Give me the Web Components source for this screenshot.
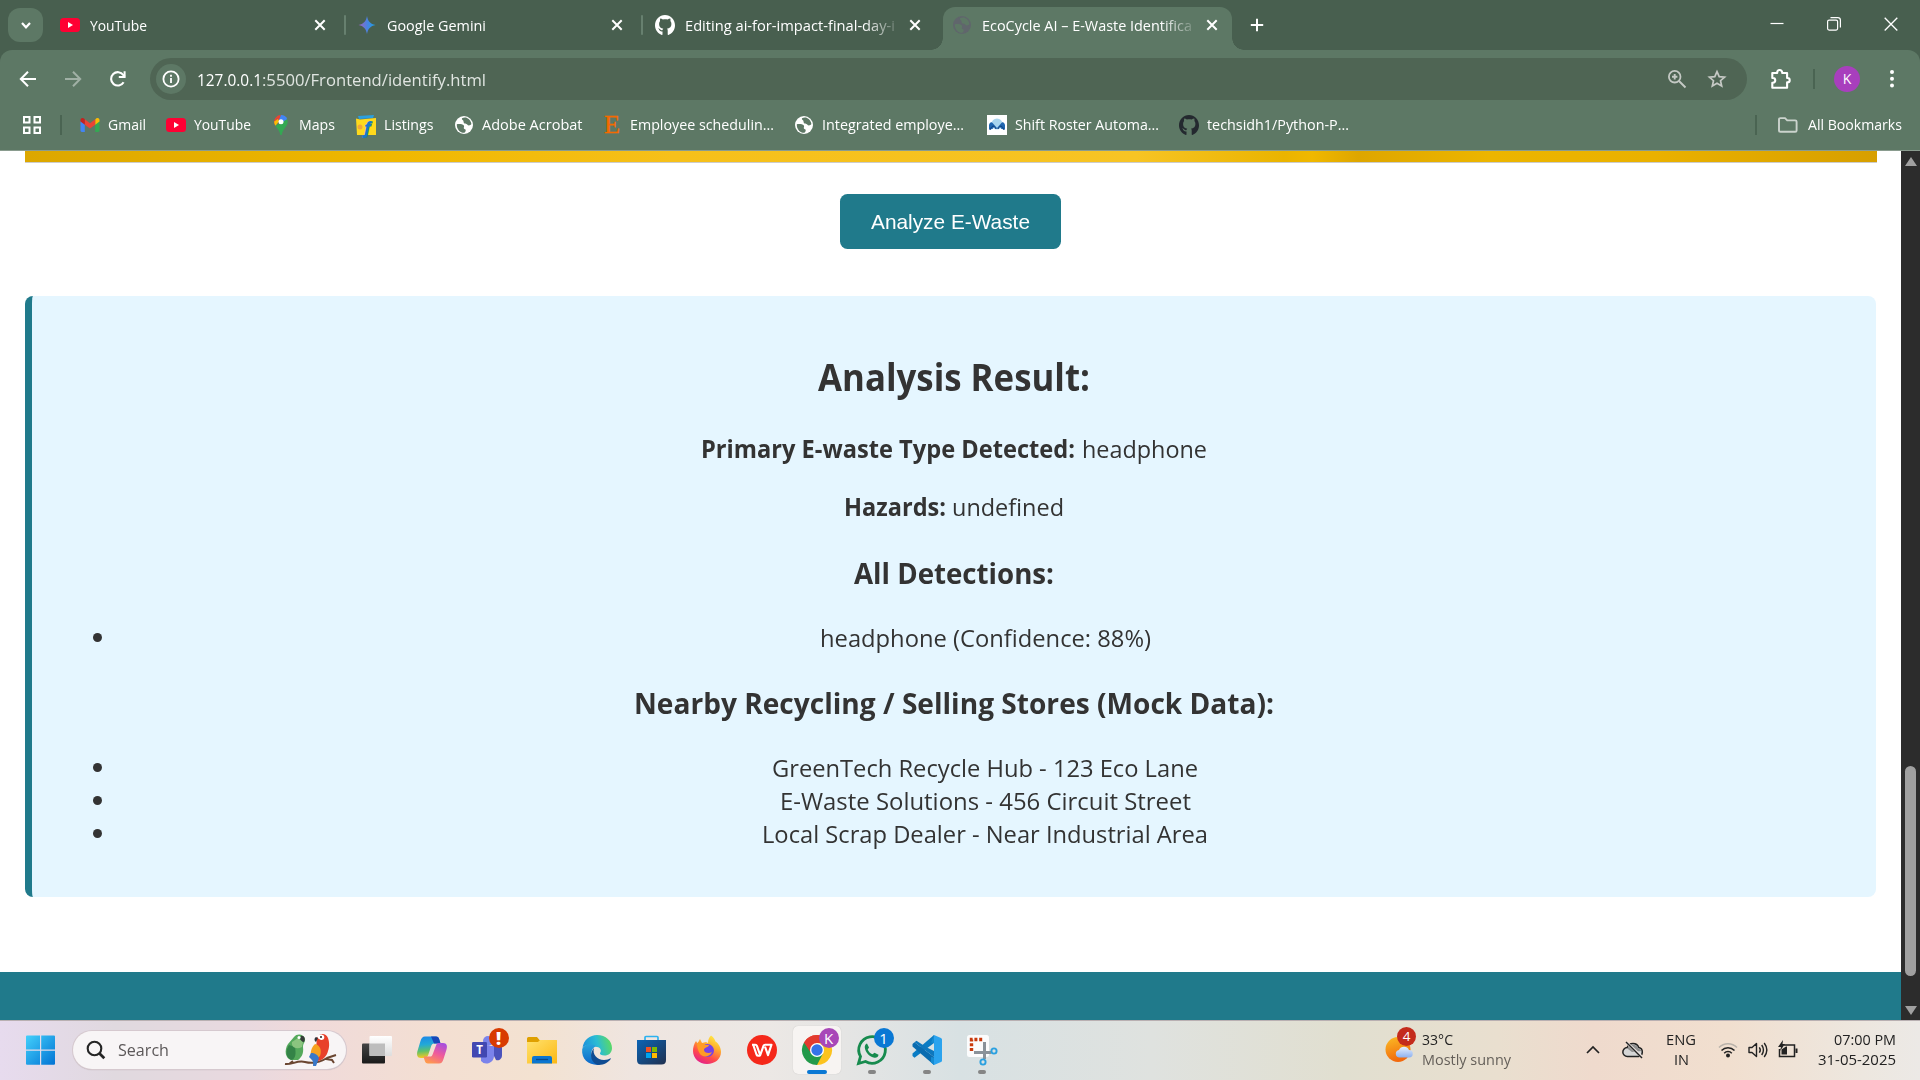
<!DOCTYPE html>
<html lang="en">
<head>
<meta charset="utf-8">
<title>EcoCycle AI – E-Waste Identification</title>
<style>
html,body{margin:0;height:100%;overflow:hidden}
body{font-family:"Open Sans","Noto Sans",sans-serif;background:#fff}
</style>
</head>
<body>
<desktop-screen></desktop-screen>
<script>
const GITHUB='<path d="M10 0C4.5 0 0 4.6 0 10.200c0 4.500 2.900 8.300 6.800 9.700.5.1.7-.2.7-.5v-2.800c-.9-.2-2.600-.4-3.200-1.700-.4-.9-.8-1.300-1.300-1.600-.4-.3 1.100-.3 1.800.8.8 1.200 1.800 1.300 2.800.9.1-.7.4-1.100.7-1.400-2.300-.3-4.200-1.200-4.200-4.800 0-1.200.4-2 1-2.700-.2-.7-.2-1.600.1-2.700.9 0 1.900.5 2.700 1.100 1.400-.4 3.300-.4 4.700 0 .8-.6 1.800-1.100 2.700-1.100.3 1.100.3 2 .1 2.700.7.7 1 1.600 1 2.700 0 3.600-2 4.500-4.400 4.800.4.4.7 1 .7 1.900v3.900c0 .3.2.6.7.5C17.300 18.500 20 14.700 20 10.200 20 4.600 15.500 0 10 0Z"/>';
function globe(c,bg){return `<circle cx="10" cy="10" r="9" fill="${c}"/><path d="M2.800 9.200C5 8.600 8.600 9 9.700 10.300c1 1.200-.3 2.300.2 3.300.5 1.200 1.800.4 1.800 1.800 0 1-.8 1.600-1.200 2.400-4.300.2-8-3.600-7.700-8.600ZM8 3.200c1.600-.9 3.700-.9 5-.3 2.500 1.200 4.200 3.600 4.400 6.100-1.500 1.900-3.300 1.700-4.200.5-.8-1-2-.4-3-1.200-1.100-.9-.2-2.200-1.200-3C8.500 4.800 7.500 4.200 8 3.200Z" fill="${bg}"/>`}
const YT='<rect x="0" y="3" width="20" height="14" rx="3.500" fill="#ff0033"/><path d="M8 7l5 3-5 3Z" fill="#fff"/>';
const ICONS={
chevdown:[20,20,'<path d="M6 8l4 4.300L14 8" fill="none" stroke="#fff" stroke-width="2.200"/>'],
close:[20,20,'<path d="M5.300 5.300l9.400 9.400M14.700 5.300l-9.400 9.400" stroke="#fff" stroke-width="2"/>'],
plus:[20,20,'<path d="M10 3.800v12.400M3.800 10h12.400" stroke="#fff" stroke-width="2"/>'],
yt:[20,20,YT],
gemini:[20,20,'<defs><linearGradient id="g" x1="0" x2="1"><stop offset=".1" stop-color="#9168c0"/><stop offset=".5" stop-color="#4c82e0"/><stop offset="1" stop-color="#1ba1e3"/></linearGradient></defs><path d="M10 1c.9 5.300 3.400 8 8.500 9-5.100 1-7.600 3.700-8.500 9-.9-5.300-3.400-8-8.500-9C6.600 9 9.100 6.300 10 1Z" fill="url(#g)"/>'],
github:[20,20,`<g fill="#fff">${GITHUB}</g>`],
githubdark:[20,20,`<g fill="#24292f">${GITHUB}</g>`],
globe:[20,20,globe('#fff','#5d7865')],
globegrey:[20,20,globe('#60666c','#5d7865')],
min:[20,20,'<path d="M3.500 9.500h13" stroke="#fff" stroke-width="1.200"/>'],
restore:[20,20,'<rect x="3.600" y="6.100" width="10" height="10" rx="1.500" fill="none" stroke="#fff" stroke-width="1.200"/><path d="M6.500 3.600h7.300a2.600 2.600 0 0 1 2.600 2.600v7.300" fill="none" stroke="#fff" stroke-width="1.200"/>'],
winclose:[20,20,'<path d="M3.700 3.700l12.600 12.800M16.300 3.700L3.700 16.500" stroke="#fff" stroke-width="1.300"/>'],
back:[20,20,'<path d="M18 10H3M10 2.800L2.800 10l7.200 7.200" fill="none" stroke="#fff" stroke-width="2"/>'],
fwd:[20,20,'<path d="M2 10h15M10 2.800l7.200 7.200-7.200 7.200" fill="none" stroke="#a0b0a5" stroke-width="2"/>'],
reload:[20,20,'<path d="M15.600 13.200A6.700 6.700 0 1 1 15.300 6l1.500 1.700" fill="none" stroke="#fff" stroke-width="2.100"/><path d="M17.600 2.200v6.800h-6.800V7h4.800V2.200Z" fill="#fff"/>'],
info:[20,20,'<circle cx="10" cy="10" r="7.600" fill="none" stroke="#fff" stroke-width="1.800"/><path d="M10 9v5M10 5.800v1.900" stroke="#fff" stroke-width="1.800"/>'],
zoom:[20,20,'<circle cx="7.700" cy="7.700" r="5.800" fill="none" stroke="#c4c9c4" stroke-width="1.800"/><path d="M12 12l6.500 6.500M7.700 5v5.400M5 7.700h5.400" stroke="#c4c9c4" stroke-width="1.900"/>'],
star:[20,20,'<path d="M10 2.600l2.200 5 5.400.5-4.100 3.600 1.200 5.300L10 14.200 5.300 17l1.200-5.300-4.100-3.600 5.400-.5Z" fill="none" stroke="#c6c9c5" stroke-width="1.700"/>'],
puzzle:[22,22,'<path d="M2.300 5h4.900V4.500a2.500 2.500 0 0 1 5 0V5h4.900v5h.4a2.200 2.200 0 0 1 0 4.400h-.4v5.300H2.300v-5h.6a2.300 2.300 0 0 0 0-4.700h-.6Z" fill="none" stroke="#fff" stroke-width="2.100" stroke-linejoin="round"/>'],
dots:[20,20,'<g fill="#fff"><circle cx="10" cy="3" r="2"/><circle cx="10" cy="9.700" r="2"/><circle cx="10" cy="16.400" r="2"/></g>'],
apps:[20,20,'<g fill="none" stroke="#fff" stroke-width="2"><rect x="2" y="2" width="5.500" height="5.500"/><rect x="12.500" y="2" width="5.500" height="5.500"/><rect x="2" y="12.500" width="5.500" height="5.500"/><rect x="12.500" y="12.500" width="5.500" height="5.500"/></g>'],
gmail:[20,20,'<path d="M.5 6v9.500c0 .8.600 1.400 1.400 1.400h2.900V8.500Z" fill="#4285f4"/><path d="M15.200 8.500v8.400h2.900c.8 0 1.400-.6 1.400-1.400V6Z" fill="#34a853"/><path d="M15.200 4.500v5.200L19.500 6.500V5c0-2-2-2.600-3.300-1.600Z" fill="#fbbc04"/><path d="M4.800 9.700V4.300L10 8.200l5.200-3.900v5.400L10 13.600Z" fill="#ea4335"/><path d="M.5 5v1.500l4.300 3.200V4.300L3.800 3.400C2.400 2.400.5 3 .5 5Z" fill="#c5221f"/>'],
maps:[20,20,'<path d="M10 0a6.800 6.800 0 0 0-5.200 2.400L8 5.200Z" fill="#ea4335"/><path d="M4.800 2.400A6.900 6.900 0 0 0 4 10l4-4.800Z" fill="#ea4335"/><path d="M10 0c3 0 5.200 1.500 6.200 4L11.800 9 8 5Z" fill="#4285f4"/><path d="M3.200 6.500c0 1.700.4 3 1.300 4.300L8.200 6.200 7 4Z" fill="#fbbc04"/><path d="M16.300 4.200c.8 2.200.5 4.600-.8 6.600C13.500 13.800 11.300 16 10.700 20H9.400C8.600 15.500 6 13.500 4.500 10.800Z" fill="#34a853"/><circle cx="10" cy="6.800" r="2.500" fill="#fff"/>'],
listings:[20,20,'<path d="M2 1l16-1-1 3-14 1Z" fill="#2a9fe0"/><path d="M0 3.500l4 1L20 3v17H1Z" fill="#ffd91c"/><circle cx="4" cy="12" r="2.500" fill="#f0a63c"/><text x="8" y="19" font-family="Open Sans" font-size="17" font-weight="800" font-style="italic" fill="#1a78c8">f</text>'],
etsy:[20,20,'<text x="2" y="18" font-family="Liberation Serif" font-size="25" textLength="16" lengthAdjust="spacingAndGlyphs" fill="#f56a00" stroke="#f56a00" stroke-width=".4">E</text>'],
shift:[20,20,'<rect width="20" height="20" fill="#fff"/><circle cx="10" cy="9" r="5.500" fill="#a8d5ee"/><path d="M2 14.500V10c1-3.500 2.800-3.500 4.500-1l3.500 4 3.500-4c1.700-2.500 3.500-2.500 4.500 1v4.500l-3.500-.5-1.500-2-3 2-3-2-1.500 2Z" fill="#1f66b0"/><path d="M3 15c2-5 4-5 6-1M17 15c-2-5-4-5-6-1" stroke="#0e3d7a" fill="none"/>'],
folder:[22,20,'<path d="M2 4.500c0-.8.600-1.400 1.400-1.400H8l2.200 2.300h8c.8 0 1.400.6 1.400 1.400v8.600c0 .8-.6 1.400-1.400 1.400H3.400c-.8 0-1.400-.6-1.400-1.400Z" fill="none" stroke="#cbd3cd" stroke-width="1.900"/>'],
win:[30,30,'<defs><linearGradient id="g" x1="0" y1="0" x2="1" y2="1"><stop offset="0" stop-color="#43d0fb"/><stop offset="1" stop-color="#0273d4"/></linearGradient></defs><path d="M0 1.500Q0 .5 1 .5H14v14H0ZM15.200.5H28q1 0 1 1v13H15.200ZM0 15.700h14v14H1q-1 0-1-1ZM15.200 15.700H29v13q0 1-1 1H15.200Z" fill="url(#g)"/>'],
search:[20,20,'<circle cx="8.500" cy="8.500" r="6.800" fill="none" stroke="#252525" stroke-width="2.100"/><path d="M13.300 13.300l5 5" stroke="#252525" stroke-width="2.700"/>'],
parrots:[54,34,'<path d="M1 31C8 32 13 27 21 29s14 1 22-4l9-3M32 28l-2 4M42 26l6 1 2 3M5 31l4-3" stroke="#6a4631" stroke-width="2" fill="none"/><path d="M10 4c3-4 10-3 11 2 .5 3-2 4-2 8 1 7-2 11-5 13H8C1 26 0 17 4 11Z" fill="#55a95c"/><path d="M5 12c-4 6-3 13 2 15 5-1 5-7 4-13Z" fill="#348347"/><path d="M8 9c-1 5 4 8 10 5l1-5-5-4Z" fill="#8bc47f"/><path d="M17 3c3-1 5 3 3 6-2 0-3-2-4-3Z" fill="#353c39"/><circle cx="15" cy="4.600" r="1.500" fill="#fff"/><path d="M33 4c3-4 9-4 11 1 1 3 2 8 0 13-1 5-5 9-10 10l-2-12Z" fill="#e8402a"/><path d="M31 11c5 1 7 6 5 12-4 4-7 5-9 3-1-7 0-11 4-15Z" fill="#f6a11f"/><path d="M27 20c4 0 7 2 8 5l-3 8h-3c1-5-1-6-4-9Z" fill="#3978c8"/><path d="M33 3c2-2 6-2 7 0 1 3-1 4-3 4-2-1-4-2-4-4Z" fill="#fff"/><path d="M32 4c-2 1-2 4 0 5l2-4Z" fill="#30333a"/><circle cx="37" cy="4" r="1" fill="#222"/>'],
taskview:[30,30,'<defs><linearGradient id="a" x2="0" y2="1"><stop stop-color="#444"/><stop offset="1" stop-color="#1a1a1a"/></linearGradient><linearGradient id="b" x2="0" y2="1"><stop stop-color="#fff"/><stop offset="1" stop-color="#ddd"/></linearGradient></defs><rect y="8.500" width="23" height="20" rx="1" fill="url(#a)"/><rect x="7.500" y="1" width="22.500" height="20" rx="1" fill="url(#b)"/><rect x="7.500" y="8.500" width="15.500" height="12.500" fill="#bdbdbd"/>'],
copilot:[30,30,'<defs><linearGradient id="a" x2=".1" y2="1"><stop stop-color="#1c86e8"/><stop offset=".4" stop-color="#22a9d8"/><stop offset=".7" stop-color="#60c16a"/><stop offset="1" stop-color="#f4c822"/></linearGradient><linearGradient id="b" x1=".8" x2=".3" y2="1"><stop stop-color="#a44fe0"/><stop offset=".5" stop-color="#ef5a9c"/><stop offset="1" stop-color="#ff9a4c"/></linearGradient></defs><path d="M13 1.500h6c2 0 2.700 1 3.300 3l1.200 4H17c-1.500 0-2.300 1-2.800 2.600l-3 9C10.500 22 9.500 23 7.500 23H4C0 23-.5 19.500.500 16L3.500 6C4.500 3 5.500 1.500 8 1.500Z" fill="url(#a)"/><path d="M14 1.500h5c2 0 2.700 1 3.300 3l1.200 4H17Z" fill="#1746b8"/><path d="M17 28.500h-6c-2 0-2.700-1-3.300-3l-1.200-4H13c1.500 0 2.300-1 2.800-2.600l3-8C19.500 8.500 20.500 8 22.500 8H26c4 0 4.500 3 3.500 6.500l-3 9.500c-1 3-2 4.500-4.500 4.500Z" fill="url(#b)"/>'],
teams:[30,30,'<circle cx="24" cy="7" r="4" fill="#5059c9"/><circle cx="16" cy="6" r="5" fill="#7b83eb"/><path d="M17 11h11.500c.8 0 1.500.7 1.500 1.500V20c0 4-3 6-6 5Z" fill="#4b53bc"/><path d="M9 11h13v10a7.500 7.500 0 0 1-13 5Z" fill="#7b83eb"/><rect y="7" width="15" height="15.500" rx="1.300" fill="#4248b2"/><text x="7.500" y="18.500" text-anchor="middle" font-family="Open Sans" font-size="11.500" font-weight="700" fill="#fff">T</text>'],
explorer:[30,30,'<path d="M0 3.500Q0 2 1.500 2H10l2.500 3H28.500Q30 5 30 6.500V12H0Z" fill="#dfa000"/><defs><linearGradient id="a" x2="1" y2="1"><stop stop-color="#ffe26e"/><stop offset="1" stop-color="#fcb813"/></linearGradient></defs><path d="M0 7h11l2-2h16q1 0 1 1v22.500H0Z" fill="url(#a)"/><path d="M5 28.500V23q0-2 2-2h16q2 0 2 2v5.500Z" fill="#0b76d0"/><path d="M9 24.500h12" stroke="#064a8c" stroke-width="1.300"/>'],
edge:[30,30,'<defs><linearGradient id="a" x2="1" y1=".5" y2=".3"><stop stop-color="#1b8fdc"/><stop offset=".5" stop-color="#2bbcd4"/><stop offset="1" stop-color="#5fdc5a"/></linearGradient><linearGradient id="b" x2="0" y2="1"><stop stop-color="#28a4dc"/><stop offset="1" stop-color="#0b66c8"/></linearGradient></defs><path d="M.5 13C1.500 5 8 0 15 0c9 0 15 6 15 13 0 5-3.500 7.500-7.500 7.500-3 0-5-1-4.500-2.500 2-2 .6-5.500-3-6C9 11 3 9 .5 13Z" fill="url(#a)"/><path d="M.2 14C2 8.500 9 8 14 11c-4 2-6 7-4 12 1.500 3.500 4 6 8 6.700C8 31-1 25 .2 14Z" fill="url(#b)"/><path d="M12 13c-2 6 3 12 10 12 3 0 5-.8 6-1.500.6-.4 1 .1.700.6C26.500 27.500 22 30 17 30 10 29 6 20 12 13Z" fill="#0f4c92"/>'],
store:[30,30,'<defs><linearGradient id="a" x2="1" y2="1"><stop stop-color="#0b64b5"/><stop offset="1" stop-color="#20304f"/></linearGradient></defs><path d="M8 7V2.500Q8 1.500 9 1.500h11q1 0 1 1V7" fill="none" stroke="#2cb2f0" stroke-width="1.700"/><path d="M0 5h29v20q0 4.500-4.500 4.500h-20Q0 29.500 0 25Z" fill="url(#a)"/><path d="M9 12h5v5H9Z" fill="#f25022"/><path d="M15 12h5v5h-5Z" fill="#7fba00"/><path d="M9 18h5v5H9Z" fill="#00a4ef"/><path d="M15 18h5v5h-5Z" fill="#ffb900"/>'],
firefox:[30,30,'<defs><linearGradient id="a" x1=".8" x2=".3" y2="1"><stop stop-color="#fff04a"/><stop offset=".35" stop-color="#ffb02c"/><stop offset=".7" stop-color="#ff4a4a"/><stop offset="1" stop-color="#e3208c"/></linearGradient></defs><path d="M19 .5c3 2 4 4.500 4.500 6 3 2 5.500 6 5.500 10.500C29 24 23 29 15 29S1 23 1 16c0-4 1-7 3-10l1.500 2.500L8 4l2 4 4-1 2 1c0-3 1-6 3-7.500Z" fill="url(#a)"/><circle cx="15.500" cy="15.500" r="6.500" fill="#7542e5"/><path d="M5 8c3-1 6 0 8 2h4c-1 3-5 2-5 5s5 4 8 2c-2 5-9 6-12 2-2-3-3-7-3-11Z" fill="#ff9b25"/>'],
wps:[30,30,'<circle cx="15" cy="15" r="15" fill="#f5281a"/><path d="M5 9.700h3.300q1.200 0 1.600 1.200l3.300 9.300 3.300-9.300q.4-1.200 1.600-1.200H24.500L21 20.200l-3-8.500M6.300 10l3.200 9.500q.5 1.300 1.800 1.300h2" fill="none" stroke="#fff" stroke-width="2.100" stroke-linejoin="round"/>'],
chrome:[30,30,'<path d="M15 15L2 7.500A15 15 0 0 1 28 7.500Z" fill="#e33b2e"/><path d="M15 15L28 7.500A15 15 0 0 1 15 30l-3-3Z" fill="#fcc31e"/><path d="M15 15l6 3.500L15 30A15 15 0 0 1 2 7.500Z" fill="#229a4a"/><path d="M15 8h13.300L21 19l-6-4Z" fill="#fcc31e"/><path d="M2 7.500L9 18l6-10 13-.5A15 15 0 0 0 2 7.500Z" fill="#e33b2e"/><circle cx="15" cy="15" r="7" fill="#fff"/><circle cx="15" cy="15" r="5.700" fill="#3473e8"/>'],
whatsapp:[30,30,'<path d="M1.500 28.500L3.500 21.500A13.300 13.300 0 1 1 8.500 26.500Z" fill="none" stroke="#178b4e" stroke-width="2.800"/><path d="M10 8.500l2 4-1.300 2c1 2.300 2.500 3.800 4.800 4.800l2-1.600 4 2c0 2-2 3.300-4 3-5-1-9-5-9.700-10-.2-2 .7-3.700 2.200-4.200Z" fill="#178b4e"/>'],
vscode:[30,30,'<path d="M22 8L2.500 22.800.500 21V18.500L22 0Z" fill="#0a7cc4"/><path d="M22 22L2.500 7.200.500 9V11.500L22 30Z" fill="#0a6cb0"/><path d="M2.500 7.200L22 22v-6L14 12 4.500 5.800Z" fill="#0e77bd"/><path d="M22 0l7 3q1 .5 1 1.500v21q0 1-1 1.500l-7 3c-1 0-1-1 0-3Z" fill="#2ba3ee"/><path d="M22 0v30l-3-2.500V22l3 .500V8l-3-.500Z" fill="#168bd2"/>'],
snip:[30,30,'<rect width="22" height="22" rx="2.500" fill="#fff" opacity=".9"/><path d="M4.500 16V4.500H16" fill="none" stroke="#c93a0c" stroke-width="3.400" stroke-dasharray="3 1.800"/><path d="M7 17.500h17M17.500 7v17" stroke="#8a9299" stroke-width="3"/><circle cx="27" cy="16" r="2.600" fill="none" stroke="#2aa0e0" stroke-width="1.900"/><circle cx="16" cy="27" r="2.600" fill="none" stroke="#2aa0e0" stroke-width="1.900"/>'],
sun:[30,30,'<defs><linearGradient id="a" x2=".3" y2="1"><stop stop-color="#fbbd25"/><stop offset="1" stop-color="#f2690d"/></linearGradient><linearGradient id="b" x2="0" y2="1"><stop stop-color="#e6f0ff"/><stop offset="1" stop-color="#8eb1ef"/></linearGradient></defs><circle cx="13" cy="14.500" r="12.500" fill="url(#a)"/><path d="M14 22.500a3.800 3.800 0 0 1 0-7.500 5.500 5.500 0 0 1 10 0 3.700 3.700 0 0 1 0 7.500Z" fill="url(#b)"/>'],
up:[20,20,'<path d="M4 13l6-6 6 6" fill="none" stroke="#222" stroke-width="1.700"/>'],
cloud:[22,20,'<path d="M5.500 16.500a4.500 4.500 0 0 1-.3-9 6.200 6.200 0 0 1 11.600 0 4.600 4.600 0 0 1-.3 9Z" fill="#d6d6d6" stroke="#222" stroke-width="1.500"/><path d="M5.300 8.500a6 6 0 0 1 11.200 0q2 .5 3 2.500L10 12Z" fill="#8e8e8e"/><path d="M4.500 2.500l15 14" stroke="#e8e0dc" stroke-width="3"/><path d="M4 2l16 16" stroke="#222" stroke-width="1.500"/>'],
wifi:[20,20,'<g fill="none" stroke="#222" stroke-width="1.500"><path d="M1 7.600a12.500 12.500 0 0 1 18 0" stroke="#b9b2aa"/><path d="M3.500 10.500a9 9 0 0 1 13 0M6.200 13.200a5.300 5.300 0 0 1 7.600 0"/></g><circle cx="10" cy="15.500" r="2" fill="#222"/>'],
volume:[20,20,'<g fill="none" stroke="#222" stroke-width="1.400"><path d="M1 7.500h3l4.500-4v13l-4.500-4H1Z" stroke-linejoin="round"/><path d="M11.300 7.300q2 2.700 0 5.400M13.700 5q3.500 5 0 10M16.200 3q5.300 7 0 14"/></g>'],
battery:[20,20,'<path d="M6 5h10.500v11.500h-15V9" fill="none" stroke="#222" stroke-width="1.500"/><path d="M3.500 14.500V9.500L8 6.500h1v8Z" fill="#222"/><path d="M5 0L0 7h3L2 11l5-7H4.500Z" fill="#222"/><rect x="17.500" y="8.500" width="2" height="4.500" fill="#222"/>']
};
const make=(name,html)=>customElements.define(name,class extends HTMLElement{
  constructor(){super();this.attachShadow({mode:'open'}).innerHTML=typeof html==='function'?html(this):html;}
});
make('desktop-screen',`<style>:host{display:flex;flex-direction:column;width:1920px;height:1080px;overflow:hidden}page-view{flex:1;min-height:0}</style>
<tab-strip></tab-strip><tool-bar></tool-bar><bookmarks-bar></bookmarks-bar><page-view></page-view><task-bar></task-bar>`);
make('tab-strip',`<style>
:host{display:flex;height:50px;background:#485f4f;box-sizing:border-box;padding-left:8px;color:#fff;font-size:14.500px}
.menu{width:35px;height:34px;border-radius:12px;background:#5d7865;margin-top:8px;display:flex;align-items:center;justify-content:center;margin-right:4px}
.new{margin:15px 0 0 10px}.wc{display:flex;margin:14px 19px 0 auto;gap:37px}
</style><div class="menu"><ui-icon n="chevdown"></ui-icon></div>
<browser-tab icon="yt" sep><fit-text w="57">YouTube</fit-text></browser-tab>
<browser-tab icon="gemini" sep><fit-text w="99">Google Gemini</fit-text></browser-tab>
<browser-tab icon="github"><fit-text w="210" fade>Editing ai-for-impact-final-day-i</fit-text></browser-tab>
<browser-tab icon="globegrey" active><fit-text w="210" fade>EcoCycle AI – E-Waste Identifica</fit-text></browser-tab>
<ui-icon class="new" n="plus"></ui-icon><div class="wc"><ui-icon n="min"></ui-icon><ui-icon n="restore"></ui-icon><ui-icon n="winclose"></ui-icon></div>`);
make('browser-tab',e=>`<style>
:host{display:block;flex:none;width:297.500px;height:50px}
.t{display:flex;align-items:center;height:36px;margin-top:7px;padding:0 15px 7px 12.500px;position:relative}
:host([active]) .t{background:#5d7865;border-radius:12px 12px 0 0;margin:7px 5px 0 3px;padding:0 10.500px 7px 9px}
.sep{position:absolute;right:-1px;top:8px;width:2px;height:20px;border-radius:1px;background:#67806f}
.c{position:absolute;bottom:0;width:12px;height:12px}
.l{left:-12px;background:radial-gradient(circle at 0 0,#0000 11.500px,#5d7865 12px)}
.r{right:-12px;background:radial-gradient(circle at 100% 0,#0000 11.500px,#5d7865 12px)}
.n{flex:1;padding-left:10px;display:flex}
</style><div class="t"><ui-icon n="${e.getAttribute('icon')}"></ui-icon><div class="n"><slot></slot></div><ui-icon n="close"></ui-icon>${e.hasAttribute('active')?'<i class="c l"></i><i class="c r"></i>':e.hasAttribute('sep')?'<i class="sep"></i>':''}</div>`);
make('tool-bar',`<style>
:host{display:block;background:#485f4f;color:#fff}
.b{height:58px;background:#5d7865;border-radius:12px 12px 0 0;display:flex;align-items:center;padding:0 18px;box-sizing:border-box}
.b>*{flex:none}
.nav{display:flex;gap:25px;width:132px}
.url{height:42px;border-radius:21px;background:#4f6554;width:1597px;display:flex;align-items:center;padding:0 20px 0 6px;box-sizing:border-box;font-size:16.800px}
.i{width:30px;height:30px;border-radius:50%;background:#5d7865;display:flex;align-items:center;justify-content:center;margin-right:11px}
.p{color:#e0e5e1}.z{margin-left:auto;display:flex;gap:20px}
.av{width:26px;height:26px;border-radius:50%;background:#a83fbd;font-size:14px;line-height:26px;text-align:center;margin:0 22px 0 19px}
.s{width:2px;height:20px;background:#4a6452;margin-left:21px}
</style><div class="b"><div class="nav"><ui-icon n="back"></ui-icon><ui-icon n="fwd"></ui-icon><ui-icon n="reload"></ui-icon></div>
<div class="url"><div class="i"><ui-icon n="info"></ui-icon></div><fit-text w="65">127.0.0.1</fit-text><fit-text class="p" w="224">:5500/Frontend/identify.html</fit-text><div class="z"><ui-icon n="zoom"></ui-icon><ui-icon n="star"></ui-icon></div></div>
<ui-icon n="puzzle" style="margin-left:23px"></ui-icon><div class="s"></div><div class="av">K</div><ui-icon n="dots"></ui-icon></div>`);
make('bookmark-item',e=>`<style>:host{display:flex;align-items:center;gap:8px}</style><ui-icon n="${e.getAttribute('icon')}"></ui-icon><slot></slot>`);
make('bookmarks-bar',`<style>
:host{display:flex;height:43px;box-sizing:border-box;background:#5d7865;border-bottom:1px solid #8a9c8f;align-items:center;padding:0 18px 9px 22px;color:#fff;font-size:14.500px}
.s{width:2px;height:20px;background:#4a6452}
bookmark-item{margin-right:20.500px}
</style><ui-icon n="apps"></ui-icon><div class="s" style="margin:0 18px 0 18px"></div>
<bookmark-item icon="gmail" style="margin-right:19.500px"><fit-text w="38">Gmail</fit-text></bookmark-item>
<bookmark-item icon="yt"><fit-text w="57">YouTube</fit-text></bookmark-item>
<bookmark-item icon="maps"><fit-text w="36">Maps</fit-text></bookmark-item>
<bookmark-item icon="listings"><fit-text w="49.500">Listings</fit-text></bookmark-item>
<bookmark-item icon="globe" style="margin-right:19.500px"><fit-text w="100.500">Adobe Acrobat</fit-text></bookmark-item>
<bookmark-item icon="etsy"><fit-text w="144">Employee schedulin...</fit-text></bookmark-item>
<bookmark-item icon="globe" style="margin-right:22.500px"><fit-text w="142">Integrated employe...</fit-text></bookmark-item>
<bookmark-item icon="shift"><fit-text w="144">Shift Roster Automa...</fit-text></bookmark-item>
<bookmark-item icon="githubdark"><fit-text w="142">techsidh1/Python-P...</fit-text></bookmark-item>
<div class="s" style="margin:0 20px 0 auto"></div><ui-icon n="folder"></ui-icon><fit-text w="94" style="margin-left:9px">All Bookmarks</fit-text>`);
make('page-view',`<style>
:host{display:flex;background:#fff}
main{flex:1;display:flex;flex-direction:column;align-items:center;overflow:hidden}
.img{width:1852px;height:11px;border-bottom:1px solid #ccc;background:linear-gradient(90deg,#dca700 0,#f0b800 20%,#f6c01a 35%,#f7c424 60%,#eab400 68%,#f0b800 69.500%,#dea600 72%,#ecb500 79%,#eab100 88%,#d79f00 100%)}
button{margin:31px 0 47px;width:221px;height:55px;border:0;border-radius:7.500px;background:#207a8b;color:#fff;font:20.800px "Liberation Sans",sans-serif;padding:0;display:flex;align-items:center;justify-content:center}
footer{margin-top:auto;width:100%;height:48px;background:#207a8b}
</style><main><div class="img"></div><button><fit-text w="159">Analyze E-Waste</fit-text></button><analysis-result></analysis-result><footer></footer></main><scroll-bar></scroll-bar>`);
make('scroll-bar',`<style>:host{display:flex;flex-direction:column;align-items:center;width:19px;background:#2c2c2c;box-sizing:border-box;padding:6px 0 5px}
.u,.d{width:0;height:0;border:6px solid #0000}.u{border-top:0;border-bottom:9px solid #a0a0a0}.d{border-bottom:0;border-top:9px solid #a0a0a0;margin-top:auto}
.t{width:11px;height:210px;border-radius:6px;background:#a0a0a0;margin-top:600px}</style><div class="u"></div><div class="t"></div><div class="d"></div>`);
make('analysis-result',`<style>
:host{display:block;box-sizing:border-box;width:1851px;height:601px;border-left:7px solid #207a8b;border-radius:8px;background:#e5f6ff;padding:56px 25px 0;color:#333;font-size:24.500px;text-align:center}
h2,h3,p,ul{margin:0;display:flex;justify-content:center}
h2{font-size:37px;line-height:50px;margin-bottom:30px}
p{line-height:33.250px;margin-bottom:25px}
h3{font-size:28.800px;line-height:39px;margin:29px 0}
ul{flex-direction:column;padding-left:36px}
</style><h2><fit-text w="272">Analysis Result:</fit-text></h2>
<p><fit-text w="374"><b>Primary E-waste Type Detected:</b></fit-text><fit-text w="125" style="margin-left:6.500px">headphone</fit-text></p>
<p><fit-text w="102"><b>Hazards:</b></fit-text><fit-text w="112" style="margin-left:6px">undefined</fit-text></p>
<h3><fit-text w="200">All Detections:</fit-text></h3>
<ul><list-row><fit-text w="331">headphone (Confidence: 88%)</fit-text></list-row></ul>
<h3><fit-text w="640">Nearby Recycling / Selling Stores (Mock Data):</fit-text></h3>
<ul><list-row><fit-text w="426">GreenTech Recycle Hub - 123 Eco Lane</fit-text></list-row>
<list-row><fit-text w="411">E-Waste Solutions - 456 Circuit Street</fit-text></list-row>
<list-row><fit-text w="446">Local Scrap Dealer - Near Industrial Area</fit-text></list-row></ul>`);
make('list-row',`<style>:host{display:flex;align-items:center;line-height:33px}i{width:9px;height:9px;border-radius:50%;background:#333;margin:0 17px 0 0}.x{flex:1;display:flex;justify-content:center}</style><i></i><div class="x"><slot></slot></div>`);
make('task-app',e=>{const g=a=>e.getAttribute(a);return `<style>
:host{display:flex;width:48px;height:48px;border-radius:5px;margin-right:7px;align-items:center;justify-content:center;position:relative}
:host([on]){background:#f7f4f2;box-shadow:0 0 1px #0003}
.b{position:absolute;left:25.500px;top:2.500px;width:20px;height:20px;border-radius:50%;color:#fff;text-align:center;font-size:15px;line-height:20px;background:${g('bc')}}
.d{position:absolute;bottom:0;width:8px;height:4px;border-radius:2px;background:#858585}
:host([on]) .d{width:20px;background:#0a78d4}
</style><ui-icon n="${g('icon')}"></ui-icon>${g('badge')?`<span class="b" style="${g('badge')=='!'?'font-weight:800;font-size:18px':''}">${g('badge')}</span>`:''}${e.hasAttribute('run')?'<i class="d"></i>':''}`});
make('task-bar',`<style>
:host{display:flex;height:60px;box-sizing:border-box;border-top:1px solid #b9b0b2;align-items:center;padding:0 24px 1.500px 26px;color:#222;font-size:15px;background:linear-gradient(90deg,#e7dbee 0,#e0d9df 6%,#e9d9df 13%,#f0dada 16%,#f3dfd2 23%,#f3e2d1 28%,#efe5e0 33%,#ece8e5 40%,#e5e5e4 44%,#d8e1e3 50%,#dfe2df 60%,#e1dfd0 70%,#e9dfcf 78%,#efdacd 83%,#f1dfcf 90%,#ede7df 97%,#ece9e6 100%)}
.s{width:273px;height:38px;border-radius:19px;background:#f8f5f6;box-shadow:0 0 0 1px #d6c9cf,0 1px 1px #a9a0a4;box-sizing:border-box;margin:0 7px 0 17px;display:flex;align-items:center;padding:0 8px 0 13px;color:#5c5859;font-size:16.800px}
.s fit-text{margin-left:12px}.s :last-child{margin-left:auto}
.w{display:flex;align-items:center;margin-left:auto;position:relative}
.b{position:absolute;left:12px;top:-2px;width:19px;height:19px;border-radius:50%;background:#c42b1c;color:#fff;font-size:13.500px;line-height:19px;text-align:center}
.c{display:flex;flex-direction:column;line-height:20px;padding-bottom:2px}
</style><ui-icon n="win"></ui-icon><div class="s"><ui-icon n="search"></ui-icon><fit-text w="51">Search</fit-text><ui-icon n="parrots"></ui-icon></div>
<task-app icon="taskview"></task-app><task-app icon="copilot"></task-app><task-app icon="teams" badge="!" bc="#d83b01"></task-app><task-app icon="explorer"></task-app><task-app icon="edge"></task-app><task-app icon="store"></task-app><task-app icon="firefox"></task-app><task-app icon="wps"></task-app><task-app icon="chrome" on run badge="K" bc="#a847b8"></task-app><task-app icon="whatsapp" run badge="1" bc="#0a78d4"></task-app><task-app icon="vscode" run></task-app><task-app icon="snip" run></task-app>
<div class="w"><ui-icon n="sun"></ui-icon><span class="b">4</span><div class="c" style="margin-left:7px;width:161px"><fit-text w="31">33°C</fit-text><fit-text w="89" style="color:#65605a">Mostly sunny</fit-text></div></div>
<ui-icon n="up"></ui-icon><ui-icon n="cloud" style="margin-left:19px"></ui-icon>
<div class="c" style="align-items:center;margin:0 22px 0 22px"><fit-text w="30">ENG</fit-text><fit-text w="15">IN</fit-text></div>
<ui-icon n="wifi"></ui-icon><ui-icon n="volume" style="margin-left:10px"></ui-icon><ui-icon n="battery" style="margin-left:10px"></ui-icon>
<div class="c" style="align-items:flex-end;margin-left:20px"><fit-text w="62">07:00 PM</fit-text><fit-text w="78">31-05-2025</fit-text></div>`);
make('ui-icon',e=>{const n=e.getAttribute('n'),[w,h,s]=ICONS[n];return `<style>:host{display:block;flex:none;width:${w}px;height:${h}px}svg{display:block;overflow:visible}</style><svg width="${w}" height="${h}" viewBox="0 0 ${w} ${h}">${s}</svg>`});
/* Text squeezed or stretched horizontally to an exact width. */
customElements.define('fit-text',class extends HTMLElement{
  constructor(){super();this.attachShadow({mode:'open'}).innerHTML='<style>:host{display:block;flex:none;white-space:nowrap}:host([fade]){mask-image:linear-gradient(90deg,#000 85%,#0003 100%)}span{display:inline-block;transform-origin:0 50%}</style><span><slot></slot></span>';}
  connectedCallback(){
    const w=+this.getAttribute('w'),s=this.shadowRoot.querySelector('span');
    const k=w/s.getBoundingClientRect().width;
    this.style.width=w+'px';
    s.style.transform='scaleX('+k+')';
  }
});
</script>
</body>
</html>
